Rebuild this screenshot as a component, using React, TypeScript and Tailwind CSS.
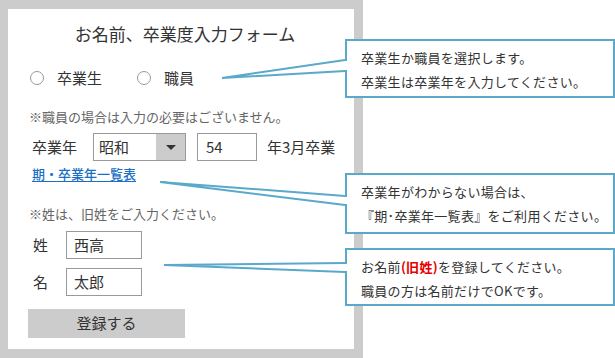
import React from "react";

const jp = { fontFamily: '"Noto Sans CJK JP", "Noto Sans", sans-serif' };
const line = "#5aa9cb";

const Radio = ({ label }: { label: string }) => (
    <label className="flex items-center">
        <span className="w-[14px] h-[14px] rounded-full border border-[#999] bg-white" />
        <span className="ml-[13px] text-[15px] text-[#333]">{label}</span>
    </label>
);

const Callout = ({ top, height, children }: { top: number; height: number; children: React.ReactNode }) => (
    <div
        className="absolute left-[345px] w-[270px] border-2 border-[#5aa9cb] bg-white pl-[14px] pt-[5px] text-[13px] leading-[24px] tracking-[0.3px] text-[#333]"
        style={{ top, height }}
    >
        {children}
    </div>
);

const NameRow = ({ label, value, className }: { label: string; value: string; className: string }) => (
    <div className={"flex items-center " + className}>
        <span className="ml-[5px] w-[33px] text-[15px] text-[#333]">{label}</span>
        <div className="w-[76px] h-[28px] border border-[#999] pl-[7px] text-[15px] leading-[26px] text-[#333]">{value}</div>
    </div>
);

export default function App() {
    return (
        <div className="relative w-[615px] h-[358px] bg-white overflow-hidden" style={jp}>
            <div className="w-[363px] h-[358px] bg-[#cccccc] pt-[9px] pl-[8px] pr-[9px]">
                <div className="w-[346px] h-[340px] bg-white pl-[20px] pt-[13px]">
                    <h1 className="pr-[12px] text-center text-[17px] leading-[24px] text-[#333]">お名前、卒業度入力フォーム</h1>

                    <div className="flex items-center gap-[35px] mt-[22px] ml-[2px] h-[20px]">
                        <Radio label="卒業生" />
                        <Radio label="職員" />
                    </div>

                    <p className="mt-[20px] ml-[1px] text-[13px] leading-[18px] text-[#666]">※職員の場合は入力の必要はございません。</p>

                    <div className="flex items-center mt-[7px] ml-[4px] h-[28px]">
                        <span className="text-[15px] text-[#333]">卒業年</span>
                        <div className="ml-[16px] flex w-[93px] h-[28px] border border-[#999]">
                            <span className="flex-1 pl-[5px] text-[15px] leading-[26px] text-[#333]">昭和</span>
                            <span className="w-[29px] h-full bg-[#cccccc] flex items-center justify-center">
                                <span className="w-0 h-0 border-l-[5px] border-r-[5px] border-t-[5px] border-l-transparent border-r-transparent border-t-[#333]" />
                            </span>
                        </div>
                        <div className="ml-[11px] w-[60px] h-[28px] border border-[#999] pl-[8px] text-[15px] leading-[26px] text-[#333]">54</div>
                        <span className="ml-[10px] text-[15px] text-[#333]">年3月卒業</span>
                    </div>

                    <a href="#" className="block w-fit mt-[4px] ml-[4px] text-[13px] leading-[18px] font-medium text-[#1a6fc4] underline underline-offset-2">期・卒業年一覧表</a>

                    <p className="mt-[22px] ml-[1px] text-[13px] leading-[18px] text-[#666]">※姓は、旧姓をご入力ください。</p>

                    <NameRow label="姓" value="西高" className="mt-[8px]" />
                    <NameRow label="名" value="太郎" className="mt-[9px]" />

                    <button className="mt-[13px] w-[157px] h-[29px] bg-[#cccccc] text-[15px] text-[#333]">登録する</button>
                </div>
            </div>

            <Callout top={39} height={59}>
                <p>卒業生か職員を選択します。</p>
                <p>卒業生は卒業年を入力してください。</p>
            </Callout>
            <Callout top={173} height={61}>
                <p>卒業年がわからない場合は、</p>
                <p>『期･卒業年一覧表』をご利用ください。</p>
            </Callout>
            <Callout top={248} height={58}>
                <p>お名前<span className="font-bold text-[#e60000]">(旧姓)</span>を登録してください。</p>
                <p>職員の方は名前だけでOKです。</p>
            </Callout>

            <svg className="absolute inset-0 pointer-events-none" width="615" height="358">
                <g stroke="#ffffff" strokeWidth="3">
                    <line x1="346" y1="61" x2="346" y2="70" />
                    <line x1="346" y1="197" x2="346" y2="204" />
                    <line x1="346" y1="264" x2="346" y2="271" />
                </g>
                <g stroke={line} strokeWidth="2" fill="none">
                    <polyline points="345,60 222,78 345,71" />
                    <polyline points="345,196 160,182 345,205" />
                    <polyline points="345,263 164,265 345,272" />
                </g>
            </svg>
        </div>
    );
}
